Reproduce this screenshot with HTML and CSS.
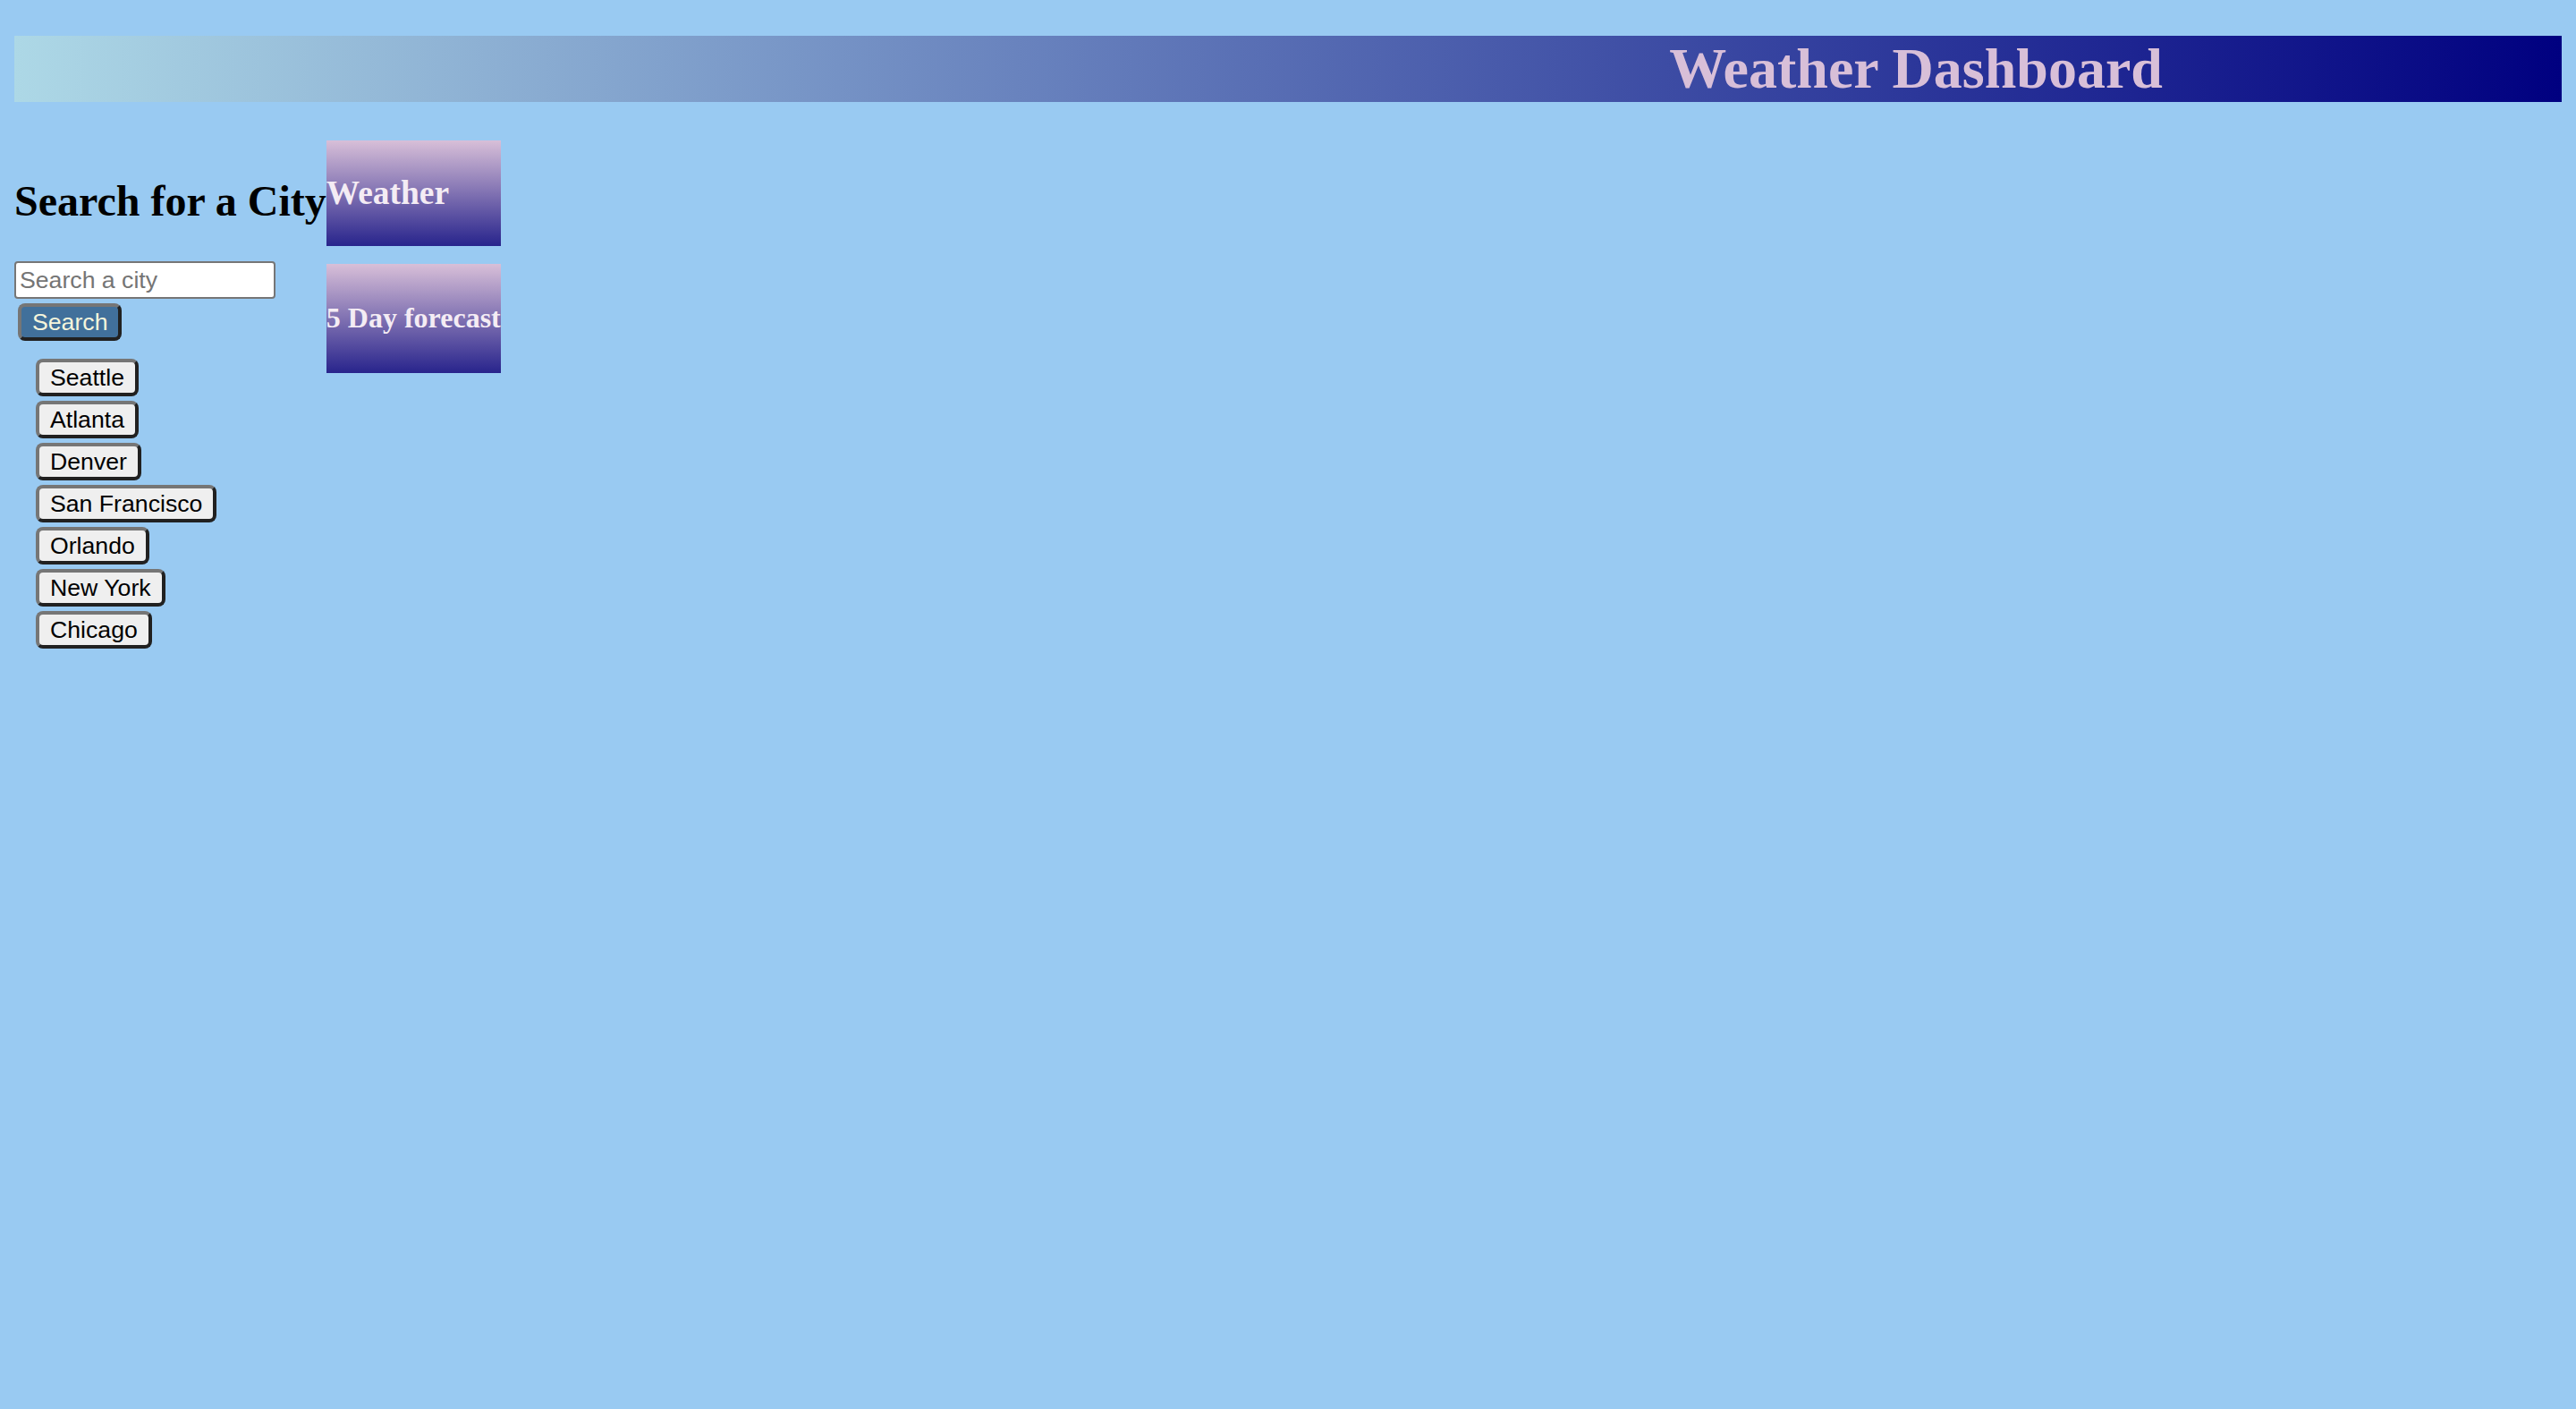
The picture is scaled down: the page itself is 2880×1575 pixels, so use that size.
FILE: index.html
```html
<!DOCTYPE html>
<html lang="en">
<head>
<meta charset="utf-8">
<title>Weather Dashboard</title>
<link rel="stylesheet" href="styles.css">
</head>
<body>
  <header class="banner">
    <h1 class="banner-title">Weather Dashboard</h1>
  </header>
  <div class="layout">
    <aside class="sidebar">
      <h2 class="sidebar-title">Search for a City</h2>
      <input class="search-input" type="text" placeholder="Search a city">
      <button class="search-btn" type="button">Search</button>
      <div class="city-list">
        <button class="city-btn" type="button">Seattle</button>
        <button class="city-btn" type="button">Atlanta</button>
        <button class="city-btn" type="button">Denver</button>
        <button class="city-btn" type="button">San Francisco</button>
        <button class="city-btn" type="button">Orlando</button>
        <button class="city-btn" type="button">New York</button>
        <button class="city-btn" type="button">Chicago</button>
      </div>
    </aside>
    <main class="cards">
      <section class="card">
        <h3 class="card-title">Weather</h3>
      </section>
      <section class="card">
        <h4 class="card-subtitle">5 Day forecast</h4>
      </section>
    </main>
  </div>
</body>
</html>
```

FILE: styles.css
```css
html, body {
  background: #99caf2;
}

body {
  margin: 0;
  padding: 16px;
  font-family: "Liberation Serif", "Times New Roman", serif;
  color: #000;
}

.banner {
  margin: 24px 0 43px;
  height: 74px;
  background: linear-gradient(to right, #add8e6, #000080);
  padding-left: 50%;
  padding-right: 20px;
  box-sizing: border-box;
}

.banner-title {
  margin: 0;
  font-size: 64px;
  line-height: 74px;
  font-weight: bold;
  color: #d8bfd8;
  text-align: center;
  white-space: nowrap;
}

.layout {
  display: flex;
  align-items: flex-start;
}

.sidebar {
  display: flex;
  flex-direction: column;
  align-items: flex-start;
}

.sidebar-title {
  margin: 40px 0;
  font-size: 48px;
  font-weight: bold;
  line-height: normal;
  white-space: nowrap;
}

.search-input {
  box-sizing: border-box;
  width: 292px;
  height: 42px;
  margin: 0;
  padding: 2px 4px;
  border: 2px solid #767676;
  border-radius: 4px;
  background: #fff;
  font-family: "Liberation Sans", Arial, sans-serif;
  font-size: 26.667px;
  color: #000;
}

.search-input::placeholder {
  color: #757575;
}

.search-btn,
.city-btn {
  box-sizing: border-box;
  height: 42px;
  padding: 2px 12px;
  border: 4px outset #767676;
  border-radius: 8px;
  font-family: "Liberation Sans", Arial, sans-serif;
  font-size: 26.667px;
  line-height: normal;
}

.search-btn {
  margin: 5px 0 0 4px;
  background: #41709b;
  color: #f5f5dc;
}

.city-list {
  display: flex;
  flex-direction: column;
  align-items: flex-start;
  gap: 5px;
  margin: 20px 0 0 24px;
}

.city-btn {
  margin: 0;
  background: #efefef;
  color: #000;
}

.cards {
  display: flex;
  flex-direction: column;
  gap: 20px;
}

.card {
  display: flow-root;
  background: linear-gradient(#d8bfd8, #28248c);
  color: #f4ecf4;
}

.card-title {
  margin: 37.44px 0;
  font-size: 37.44px;
  font-weight: bold;
  line-height: normal;
  white-space: nowrap;
}

.card-subtitle {
  margin: 42.56px 0;
  font-size: 32px;
  font-weight: bold;
  line-height: normal;
  white-space: nowrap;
}
```
